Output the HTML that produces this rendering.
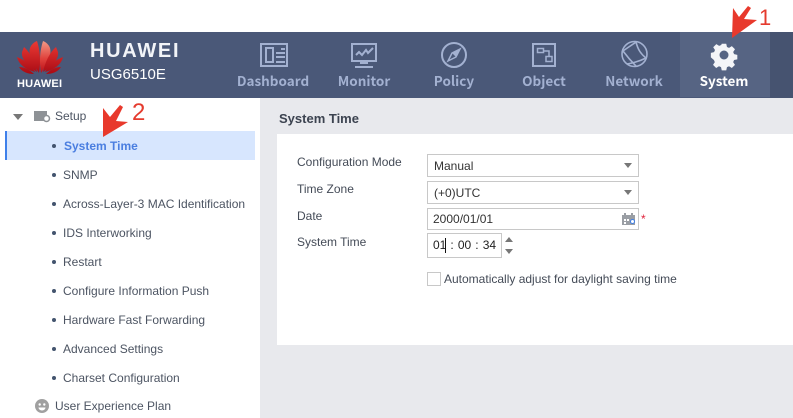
<!DOCTYPE html>
<html><head><meta charset="utf-8">
<style>
*{box-sizing:border-box}
html,body{margin:0;padding:0;background:#fff}
body{width:793px;height:418px;position:relative;overflow:hidden;font-family:"Liberation Sans",sans-serif;font-size:12px;color:#444b57}
.a{position:absolute;white-space:nowrap}
.nav{position:absolute;top:71px;font-weight:bold;color:#a3b1d1;line-height:18px;width:90px;text-align:center;font-family:"Noto Sans CJK SC","Liberation Sans",sans-serif;font-size:13.5px}
.li{position:absolute;left:63px;color:#4c5462;line-height:16px;white-space:nowrap}
.dot{position:absolute;left:52px;width:4px;height:4px;border-radius:50%;background:#43546e}
.lb{position:absolute;left:297px;color:#444b57;line-height:16px;white-space:nowrap}
.box{position:absolute;left:427px;width:212px;border:1px solid #c8c8c8;background:#fff;color:#333;line-height:22px;padding-left:6px;white-space:nowrap}
.tri{position:absolute;width:0;height:0;border-left:4px solid transparent;border-right:4px solid transparent;border-top:5px solid #777}
svg{position:absolute;overflow:visible}
</style></head><body>
<div class="a" style="left:0;top:32px;width:793px;height:66px;background:#4a5878"></div>
<div class="a" style="left:680px;top:32px;width:90px;height:65px;background:#566483"></div>
<div class="a" style="left:770px;top:32px;width:23px;height:66px;background:#465370"></div>

<svg style="left:0;top:0" width="80" height="98" viewBox="0 0 80 98">
<defs>
<linearGradient id="g" x1="0" y1="40" x2="0" y2="74" gradientUnits="userSpaceOnUse"><stop offset="0" stop-color="#ee3b35"/><stop offset="1" stop-color="#a90b14"/></linearGradient>
<linearGradient id="h" x1="0" y1="41" x2="0" y2="73" gradientUnits="userSpaceOnUse"><stop offset="0" stop-color="#f29a86"/><stop offset=".55" stop-color="#e0423c"/><stop offset="1" stop-color="#b80e17"/></linearGradient>
</defs>
<g fill="url(#g)">
<path d="M39 73C33 64 28 55 30 48 31 45 34 42 37 41 40 50 41 62 39 73Z"/>
<path d="M41 73C47 64 52 55 50 48 49 45 46 42 43 41 40 50 39 62 41 73Z" fill="url(#h)"/>
<path d="M37 72C29 67 21 60 22 52L24 47C30 52 35 62 37 72Z"/>
<path d="M43 72C51 67 59 60 58 52L56 47C50 52 45 62 43 72Z"/>
<path d="M35 72C28 70 19 66 17 57 25 60 31 65 35 72Z"/>
<path d="M45 72C52 70 61 66 63 57 55 60 49 65 45 72Z"/>
<path d="M34 74C28 74 22 72 19 67 25 67 30 70 34 74Z"/>
<path d="M46 74C52 74 58 72 61 67 55 67 50 70 46 74Z"/>
</g></svg>
<div class="a" style="left:17px;top:78px;font-size:11px;font-weight:bold;color:#fff;line-height:13px;letter-spacing:.2px">HUAWEI</div>
<div class="a" style="left:90px;top:40px;font-size:20px;font-weight:bold;color:#f2f4f8;line-height:23px;letter-spacing:1.7px">HUAWEI</div>
<div class="a" style="left:90px;top:66px;font-size:15px;color:#fff;line-height:18px">USG6510E</div>

<!-- nav icons -->
<svg style="left:260px;top:42px" width="30" height="26" fill="none" stroke="#a3b1d1" stroke-width="2">
<rect x="1" y="2" width="26" height="22"/><rect x="6" y="6" width="7" height="14"/>
<path d="M21 7h4M16 11h9M16 15h9M16 20h9"/></svg>
<svg style="left:351px;top:42px" width="30" height="28" fill="none" stroke="#a3b1d1" stroke-width="2">
<rect x="1" y="2" width="24" height="17"/>
<path d="M5 13l3-3 3 3 4-5 2 3 5-5" stroke-width="2"/>
<path d="M9 20.500h8" stroke-width="3"/><path d="M4 25h18" stroke-width="2"/></svg>
<svg style="left:440px;top:41px" width="28" height="28" fill="none" stroke="#a3b1d1" stroke-width="2">
<circle cx="14" cy="14" r="12"/><path d="M20 8L16 16 8 20 12 12Z" stroke-width="1.500"/><path d="M20 8L16 16 12 12Z" fill="#a3b1d1" stroke="none"/></svg>
<svg style="left:531px;top:42px" width="28" height="26" fill="none" stroke="#a3b1d1" stroke-width="2">
<rect x="2" y="2" width="22" height="22"/><rect x="6.500" y="6.500" width="6" height="4" stroke-width="1.500"/><rect x="15" y="14.500" width="6" height="5" stroke-width="1.500"/><path d="M12.500 9h5.500v5.500" stroke-width="1.500"/></svg>
<svg style="left:620px;top:40px" width="28" height="28" fill="none" stroke="#a3b1d1" stroke-width="1.600">
<circle cx="14.500" cy="14" r="12.500"/><path d="M3 11C7 8 12 5 16 2M16 2C18 10 21 14 26 18M7 24C13 23 20 21 26 18M3 11C6 15 10 20 16 26"/></svg>
<div class="nav" style="left:228px">Dashboard</div>
<div class="nav" style="left:319px">Monitor</div>
<div class="nav" style="left:409px">Policy</div>
<div class="nav" style="left:499px">Object</div>
<div class="nav" style="left:589px">Network</div>
<div class="nav" style="left:679px;color:#fff">System</div>

<svg style="left:710px;top:41px" width="28" height="28" viewBox="0 0 28 28"><path fill="#f4f5f8" fill-rule="evenodd" d="M11.500 1.500h5l.8 3.600 2.300 1 3.100-2 3.500 3.500-2 3.100 1 2.300 3.600.8v5l-3.600.8-1 2.300 2 3.100-3.500 3.500-3.100-2-2.300 1-.8 3.600h-5l-.8-3.600-2.300-1-3.100 2-3.500-3.500 2-3.100-1-2.300L-.6 16.600v-5l3.600-.8 1-2.300-2-3.100 3.500-3.500 3.100 2 2.300-1zM14 9a5 5 0 1 0 0 10 5 5 0 0 0 0-10z" transform="translate(1.400 1.400) scale(.9)"/></svg>

<!-- main -->
<div class="a" style="left:260px;top:98px;width:533px;height:320px;background:#e8e9ed"></div>
<div class="a" style="left:279px;top:111px;font-size:13px;font-weight:bold;color:#3c4350;line-height:16px">System Time</div>
<div class="a" style="left:277px;top:134px;width:516px;height:211px;background:#fff"></div>

<!-- sidebar -->
<div class="tri" style="left:13px;top:114px;border-left-width:5px;border-right-width:5px;border-top-width:6px"></div>
<svg style="left:34px;top:110px" width="17" height="13"><rect x="0" y="1" width="13" height="10" fill="#8e9296"/><circle cx="12.500" cy="8.500" r="3" fill="#fff" stroke="#8e9296" stroke-width="1.500"/></svg>
<div class="li" style="left:55px;top:108px">Setup</div>
<div class="a" style="left:5px;top:131px;width:250px;height:29px;background:#d7e6fe;border-left:2px solid #3f80ea"></div>
<div class="dot" style="top:144px"></div><div class="li" style="left:64px;top:138px;font-weight:bold;color:#4a7ee0">System Time</div>
<div class="dot" style="top:173px"></div><div class="li" style="top:167px">SNMP</div>
<div class="dot" style="top:202px"></div><div class="li" style="top:196px">Across-Layer-3 MAC Identification</div>
<div class="dot" style="top:231px"></div><div class="li" style="top:225px">IDS Interworking</div>
<div class="dot" style="top:260px"></div><div class="li" style="top:254px">Restart</div>
<div class="dot" style="top:289px"></div><div class="li" style="top:283px">Configure Information Push</div>
<div class="dot" style="top:318px"></div><div class="li" style="top:312px">Hardware Fast Forwarding</div>
<div class="dot" style="top:347px"></div><div class="li" style="top:341px">Advanced Settings</div>
<div class="dot" style="top:376px"></div><div class="li" style="top:370px">Charset Configuration</div>
<svg style="left:35px;top:399px" width="14" height="14"><circle cx="7" cy="7" r="7" fill="#a0a0a0"/><circle cx="4.700" cy="5.500" r="1.200" fill="#fff"/><circle cx="9.300" cy="5.500" r="1.200" fill="#fff"/><path d="M3.500 8.500h7a3.500 3 0 0 1-7 0z" fill="#fff"/></svg>
<div class="li" style="left:55px;top:398px">User Experience Plan</div>

<!-- form -->
<div class="lb" style="top:154px">Configuration Mode</div>
<div class="lb" style="top:181px">Time Zone</div>
<div class="lb" style="top:208px">Date</div>
<div class="lb" style="top:234px">System Time</div>
<div class="box" style="top:154px;height:23px">Manual</div>
<div class="tri" style="left:624px;top:163px"></div>
<div class="box" style="top:181px;height:23px">(+0)UTC</div>
<div class="tri" style="left:624px;top:190px"></div>
<div class="box" style="top:208px;height:22px;line-height:20px;padding-left:5px">2000/01/01</div>
<svg style="left:622px;top:213px" width="15" height="13"><rect x="0" y="2" width="13" height="10" fill="#9a9ea4"/><rect x="2" y="0" width="2" height="3" fill="#9a9ea4"/><rect x="9" y="0" width="2" height="3" fill="#9a9ea4"/><rect x="2" y="6" width="2" height="2" fill="#fff"/><rect x="5" y="6" width="2" height="2" fill="#fff"/><rect x="2" y="9" width="2" height="2" fill="#fff"/><circle cx="10.500" cy="8.500" r="2" fill="#fff" stroke="#3f80ea"/></svg>
<div class="a" style="left:641px;top:213px;color:#e0233c;font-size:12px;line-height:12px">*</div>
<div class="a" style="left:427px;top:233px;width:75px;height:25px;border:1px solid #c8c8c8;background:#fff;color:#222;line-height:23px;padding-left:5px;word-spacing:.75px">01 : 00 : 34</div>
<div class="a" style="left:445px;top:238px;width:1px;height:15px;background:#111"></div>
<div class="tri" style="left:505px;top:237px;border-top:0;border-bottom:5px solid #777"></div>
<div class="tri" style="left:505px;top:249px"></div>
<div class="a" style="left:427px;top:272px;width:14px;height:14px;border:1px solid #c8c8c8;background:#fff"></div>
<div class="a" style="left:444px;top:271px;color:#444b57;line-height:16px">Automatically adjust for daylight saving time</div>

<!-- annotations -->
<svg style="left:0;top:0" width="793" height="200">
<path d="M732 38L733 8 739 17 748 6 751 8 744 19 757 20Z" fill="#e8392c"/>
<path d="M103 137L103 108 110 117 120 105 123 107 116 121 128 122Z" fill="#e8392c"/>
</svg>
<div class="a" style="left:759px;top:5px;font-size:22px;color:#e53b2e;line-height:26px">1</div>
<div class="a" style="left:132px;top:100px;font-size:24px;color:#e53b2e;line-height:26px">2</div>
</body></html>
